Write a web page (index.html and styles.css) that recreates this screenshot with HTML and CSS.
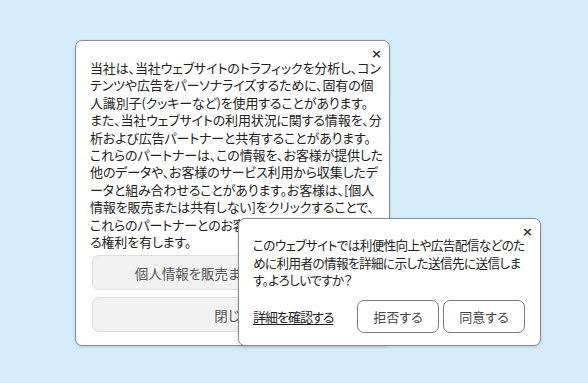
FILE: index.html
```html
<!DOCTYPE html>
<html lang="ja">
<head>
<meta charset="utf-8">
<link rel="stylesheet" href="styles.css">
</head>
<body>
<div class="stage">
  <div class="dialog privacy">
    <span class="close">×</span>
    <p class="text">当社は、当社ウェブサイトのトラフィックを分析し、コン<br>テンツや広告をパーソナライズするために、固有の個<br>人識別子(クッキーなど)を使用することがあります。<br>また、当社ウェブサイトの利用状況に関する情報を、分<br>析および広告パートナーと共有することがあります。<br>これらのパートナーは、この情報を、お客様が提供した<br>他のデータや、お客様のサービス利用から収集したデ<br>ータと組み合わせることがあります。お客様は、[個人<br>情報を販売または共有しない]をクリックすることで、<br>これらのパートナーとのお客様の情報の共有を拒否す<br>る権利を有します。</p>
    <div class="actions">
      <button class="btn-wide">個人情報を販売または共有しない</button>
      <button class="btn-wide">閉じる</button>
    </div>
  </div>
  <div class="dialog consent">
    <span class="close">×</span>
    <p class="text text-sm">このウェブサイトでは利便性向上や広告配信などのた<br>めに利用者の情報を詳細に示した送信先に送信しま<br>す。よろしいですか？</p>
    <div class="row">
      <a class="link" href="#">詳細を確認する</a>
      <div class="btns">
        <button class="btn">拒否する</button>
        <button class="btn">同意する</button>
      </div>
    </div>
  </div>
</div>
</body>
</html>
```

FILE: styles.css
```css
* { box-sizing: border-box; }
html, body { margin: 0; padding: 0; }
body {
  background: #d5edfa;
  font-family: "Noto Sans CJK JP", "Noto Sans", sans-serif;
  font-feature-settings: "palt";
  color: #222;
  width: 588px;
  height: 383px;
  overflow: hidden;
}
.stage { position: relative; width: 588px; height: 383px; }
.dialog {
  position: absolute;
  background: #fff;
  border: 1px solid #8c8c8c;
  border-radius: 7px;
  box-shadow: 0 1px 3px rgba(0,0,0,0.15);
  display: flex;
  flex-direction: column;
}
.privacy { left: 75px; top: 40px; width: 315px; height: 306px; padding: 18px 14px 12px 14px; }
.consent { left: 238px; top: 218px; width: 303px; height: 128px; padding: 17px 15px 12px 14px; }
.close {
  position: absolute;
  top: 5px;
  right: 7px;
  font-family: "DejaVu Sans", sans-serif;
  font-weight: bold;
  font-size: 13px;
  color: #333;
  line-height: 16px;
}
.text {
  margin: 0;
  font-size: 13px;
  line-height: 17.4px;
  white-space: nowrap;
  letter-spacing: -0.15px;
}
.consent .text-sm { font-size: 12.6px; letter-spacing: -0.6px; line-height: 17.5px; }
.actions {
  margin-top: 5px;
  display: flex;
  flex-direction: column;
  gap: 7px;
  padding: 0 1px 0 2px;
}
button {
  font-family: inherit;
  font-feature-settings: "palt";
  font-size: 13px;
  cursor: pointer;
}
.btn-wide {
  height: 35px;
  background: #f2f2f2;
  border: 1px solid #dcdcdc;
  border-radius: 7px;
  color: #555;
  font-size: 13.5px;
}
.row {
  margin-top: auto;
  display: flex;
  align-items: center;
  justify-content: space-between;
}
.link {
  color: #222;
  font-size: 13px;
  letter-spacing: -1px;
  text-decoration: underline;
  text-underline-offset: 2px;
}
.btns { display: flex; gap: 4px; }
.btn {
  width: 82px;
  height: 33px;
  background: #fff;
  border: 1px solid #7a7a7a;
  border-radius: 7px;
  color: #444;
}
```
